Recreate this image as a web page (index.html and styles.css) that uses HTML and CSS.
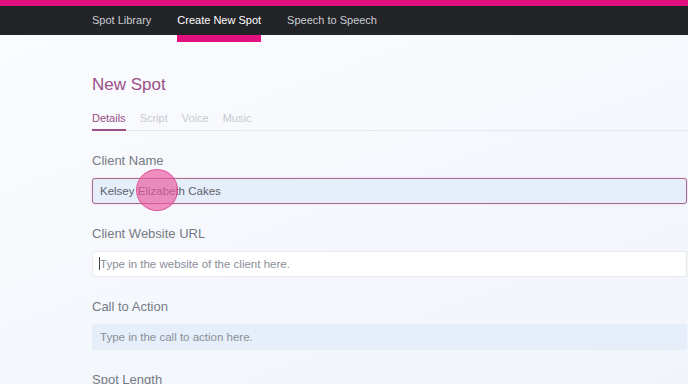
FILE: index.html
```html
<!DOCTYPE html>
<html lang="en">
<head>
    <meta charset="UTF-8">
    <meta name="viewport" content="width=device-width, initial-scale=1.0">
    <title>New Spot</title>
    <link rel="stylesheet" href="styles.css">
</head>
<body>
    <div class="topbar"></div>
    <nav class="nav">
        <a class="nav-item">Spot Library</a>
        <a class="nav-item active">Create New Spot</a>
        <a class="nav-item">Speech to Speech</a>
    </nav>

    <main class="page">
        <h1 class="title">New Spot</h1>

        <div class="tabs">
            <span class="tab active">Details</span>
            <span class="tab">Script</span>
            <span class="tab">Voice</span>
            <span class="tab">Music</span>
        </div>

        <div class="field">
            <label>Client Name</label>
            <div class="input focused">Kelsey Elizabeth Cakes<span class="touch"></span></div>
        </div>

        <div class="field">
            <label>Client Website URL</label>
            <div class="input plain placeholder"><span class="caret"></span>Type in the website of the client here.</div>
        </div>

        <div class="field">
            <label>Call to Action</label>
            <div class="input filled placeholder">Type in the call to action here.</div>
        </div>

        <div class="field">
            <label>Spot Length</label>
        </div>
    </main>
</body>
</html>
```

FILE: styles.css
```css
body {
    margin: 0;
    font-family: "Liberation Sans", Arial, sans-serif;
    background: linear-gradient(160deg, #fbfcfe 0%, #f4f7fc 60%, #f1f4fa 100%);
    height: 384px;
    overflow: hidden;
}
.topbar {
    height: 6px;
    background-color: #e2117f;
}
.nav {
    height: 29px;
    background-color: #232428;
    display: flex;
    padding-left: 92px;
    gap: 26px;
}
.nav-item {
    position: relative;
    color: #c9ccd3;
    font-size: 11px;
    line-height: 29px;
}
.nav-item.active {
    color: #ffffff;
}
.nav-item.active::after {
    content: "";
    position: absolute;
    left: 0;
    right: 0;
    top: 29px;
    height: 7px;
    background-color: #e2117f;
}
.page {
    padding: 40px 0 0 92px;
}
.title {
    margin: 0;
    font-size: 17px;
    font-weight: normal;
    color: #9a4f86;
    line-height: 20px;
}
.tabs {
    display: flex;
    gap: 14px;
    margin-top: 17px;
    border-bottom: 1px solid #e6e8ee;
}
.tab {
    font-size: 11px;
    color: #c8cad2;
    padding-bottom: 7px;
    margin-bottom: -1px;
}
.tab.active {
    color: #9a4f86;
    border-bottom: 2px solid #9a4f86;
    padding-bottom: 5px;
}
.field {
    margin-top: 22px;
}
.field label {
    display: block;
    font-size: 13px;
    color: #767a84;
    line-height: 16px;
    margin-bottom: 9px;
}
.input {
    position: relative;
    box-sizing: border-box;
    height: 26px;
    margin-right: 1px;
    padding-left: 7px;
    font-size: 11.5px;
    line-height: 24px;
    color: #5d616c;
    border: 1px solid transparent;
    border-radius: 3px;
}
.input.focused {
    background-color: #e6eef9;
    border-color: #a56a93;
    box-shadow: 0 0 2px rgba(226, 17, 127, 0.25);
}
.input.plain {
    background-color: #ffffff;
    border-color: #e8eaee;
    padding-left: 6px;
}
.input.filled {
    background-color: #e5eef9;
}
.placeholder {
    color: #8a8e98;
}
.caret {
    display: inline-block;
    width: 1px;
    height: 13px;
    background-color: #444;
    vertical-align: -2px;
}
.touch {
    position: absolute;
    left: 43px;
    top: -10px;
    width: 42px;
    height: 42px;
    border-radius: 50%;
    background-color: rgba(236, 86, 158, 0.65);
    border: 1px solid rgba(214, 60, 140, 0.7);
    box-sizing: border-box;
}
```
